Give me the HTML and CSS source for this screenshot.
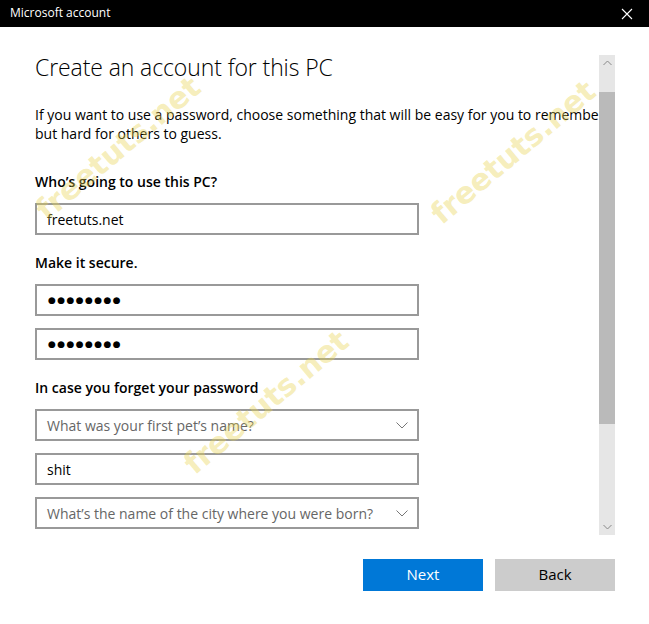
FILE: index.html
```html
<!DOCTYPE html>
<html lang="en">
<head>
<meta charset="utf-8">
<title>Microsoft account</title>
<link rel="stylesheet" href="styles.css">
</head>
<body>
<div class="window">
  <header class="titlebar">
    <span class="title">Microsoft account</span>
    <svg class="close" width="12" height="12" viewBox="0 0 12 12" aria-hidden="true">
      <path d="M1 1 L11 11 M11 1 L1 11" stroke="#fff" stroke-width="1.1" fill="none"/>
    </svg>
  </header>

  <div class="main">
    <div class="content">
      <h1 class="heading">Create an account for this PC</h1>
      <p class="intro">If you want to use a password, choose something that will be easy for you to remember<br>but hard for others to guess.</p>

      <div class="label">Who’s going to use this PC?</div>
      <div class="field"><span class="value">freetuts.net</span></div>

      <div class="label">Make it secure.</div>
      <div class="field"><span class="dots">●●●●●●●●</span></div>
      <div class="field gap"><span class="dots">●●●●●●●●</span></div>

      <div class="label">In case you forget your password</div>
      <div class="field select"><span class="placeholder">What was your first pet’s name?</span>
        <svg class="chev" width="12" height="7" viewBox="0 0 12 7" aria-hidden="true"><path d="M0.5 0.5 L6 6 L11.5 0.5" stroke="#777" stroke-width="1" fill="none"/></svg>
      </div>
      <div class="field gap"><span class="value">shit</span></div>
      <div class="field select gap"><span class="placeholder">What’s the name of the city where you were born?</span>
        <svg class="chev" width="12" height="7" viewBox="0 0 12 7" aria-hidden="true"><path d="M0.5 0.5 L6 6 L11.5 0.5" stroke="#777" stroke-width="1" fill="none"/></svg>
      </div>
    </div>

    <div class="scrollbar">
      <svg class="arrow" width="9" height="6" viewBox="0 0 9 6" aria-hidden="true"><path d="M0.5 5 L4.5 1 L8.5 5" stroke="#888" stroke-width="1" fill="none"/></svg>
      <div class="track-top"></div>
      <div class="thumb"></div>
      <div class="track-bottom"></div>
      <svg class="arrow" width="9" height="6" viewBox="0 0 9 6" aria-hidden="true"><path d="M0.5 1 L4.5 5 L8.5 1" stroke="#888" stroke-width="1" fill="none"/></svg>
    </div>
  </div>

  <footer class="footer">
    <button class="btn primary">Next</button>
    <button class="btn secondary">Back</button>
  </footer>

  <span class="wm wm1">freetuts.net</span>
  <span class="wm wm2">freetuts.net</span>
  <span class="wm wm3">freetuts.net</span>
</div>
</body>
</html>
```

FILE: styles.css
```css
* { box-sizing: border-box; }

html, body {
  margin: 0;
  padding: 0;
  background: #fff;
}

body {
  font-family: "Open Sans", "Noto Sans", sans-serif;
  color: #000;
}

.window {
  position: relative;
  width: 649px;
  height: 624px;
  overflow: hidden;
  background: #fff;
}

.titlebar {
  height: 27px;
  background: #000;
  color: #fff;
  display: flex;
  align-items: center;
  justify-content: space-between;
  padding: 0 16px 2px 10px;
}

.title {
  font-size: 12px;
  line-height: 16px;
}

.close {
  display: block;
  margin-top: 2px;
}

.main {
  display: flex;
  height: 508px;
}

.content {
  width: 599px;
  flex: none;
  overflow: hidden;
  padding: 24px 0 0 35px;
  white-space: nowrap;
}

.heading {
  margin: 0;
  font-weight: 300;
  font-size: 23px;
  line-height: 32px;
  letter-spacing: -0.1px;
}

.intro {
  margin: 22px 0 0;
  font-size: 14px;
  line-height: 19px;
}

.label {
  margin: 29px 0 11px;
  font-size: 14px;
  font-weight: 600;
  line-height: 20px;
}

.field + .label {
  margin-top: 18px;
}

.field {
  width: 384px;
  height: 32px;
  border: 2px solid #999;
  display: flex;
  align-items: center;
  padding: 0 10px;
  font-size: 14px;
}

.field.gap {
  margin-top: 12px;
}

.value {
  color: #000;
}

.placeholder {
  color: #666;
  flex: 1;
}

.select {
  justify-content: space-between;
}

.chev {
  display: block;
  margin-right: -1px;
}

.dots {
  font-family: "DejaVu Sans", sans-serif;
  font-size: 9px;
  letter-spacing: 1.4px;
  padding-left: 1px;
}

.scrollbar {
  width: 16px;
  margin-top: 28px;
  height: 480px;
  background: #e6e6e6;
  display: flex;
  flex-direction: column;
  align-items: center;
}

.arrow {
  display: block;
  flex: none;
  margin: 5px 0;
}

.track-top {
  height: 21px;
  flex: none;
}

.thumb {
  width: 16px;
  height: 332px;
  background: #bababa;
  flex: none;
}

.track-bottom {
  flex: 1;
}

.footer {
  display: flex;
  justify-content: flex-end;
  gap: 12px;
  padding: 24px 34px 0 0;
}

.btn {
  width: 120px;
  height: 32px;
  border: 0;
  padding: 0 0 2px;
  font-family: "Open Sans", "Noto Sans", sans-serif;
  font-size: 15px;
}

.primary {
  background: #0078d7;
  color: #fff;
}

.secondary {
  background: #cccccc;
  color: #000;
}

.wm {
  position: absolute;
  font-family: "DejaVu Sans", "Liberation Sans", sans-serif;
  font-weight: bold;
  font-size: 30px;
  color: rgba(232, 212, 80, 0.4);
  white-space: nowrap;
  transform: translate(-50%, -50%) rotate(-40deg);
  pointer-events: none;
}

.wm1 { left: 118px; top: 148px; }
.wm2 { left: 266px; top: 402px; }
.wm3 { left: 513px; top: 152px; }
```
